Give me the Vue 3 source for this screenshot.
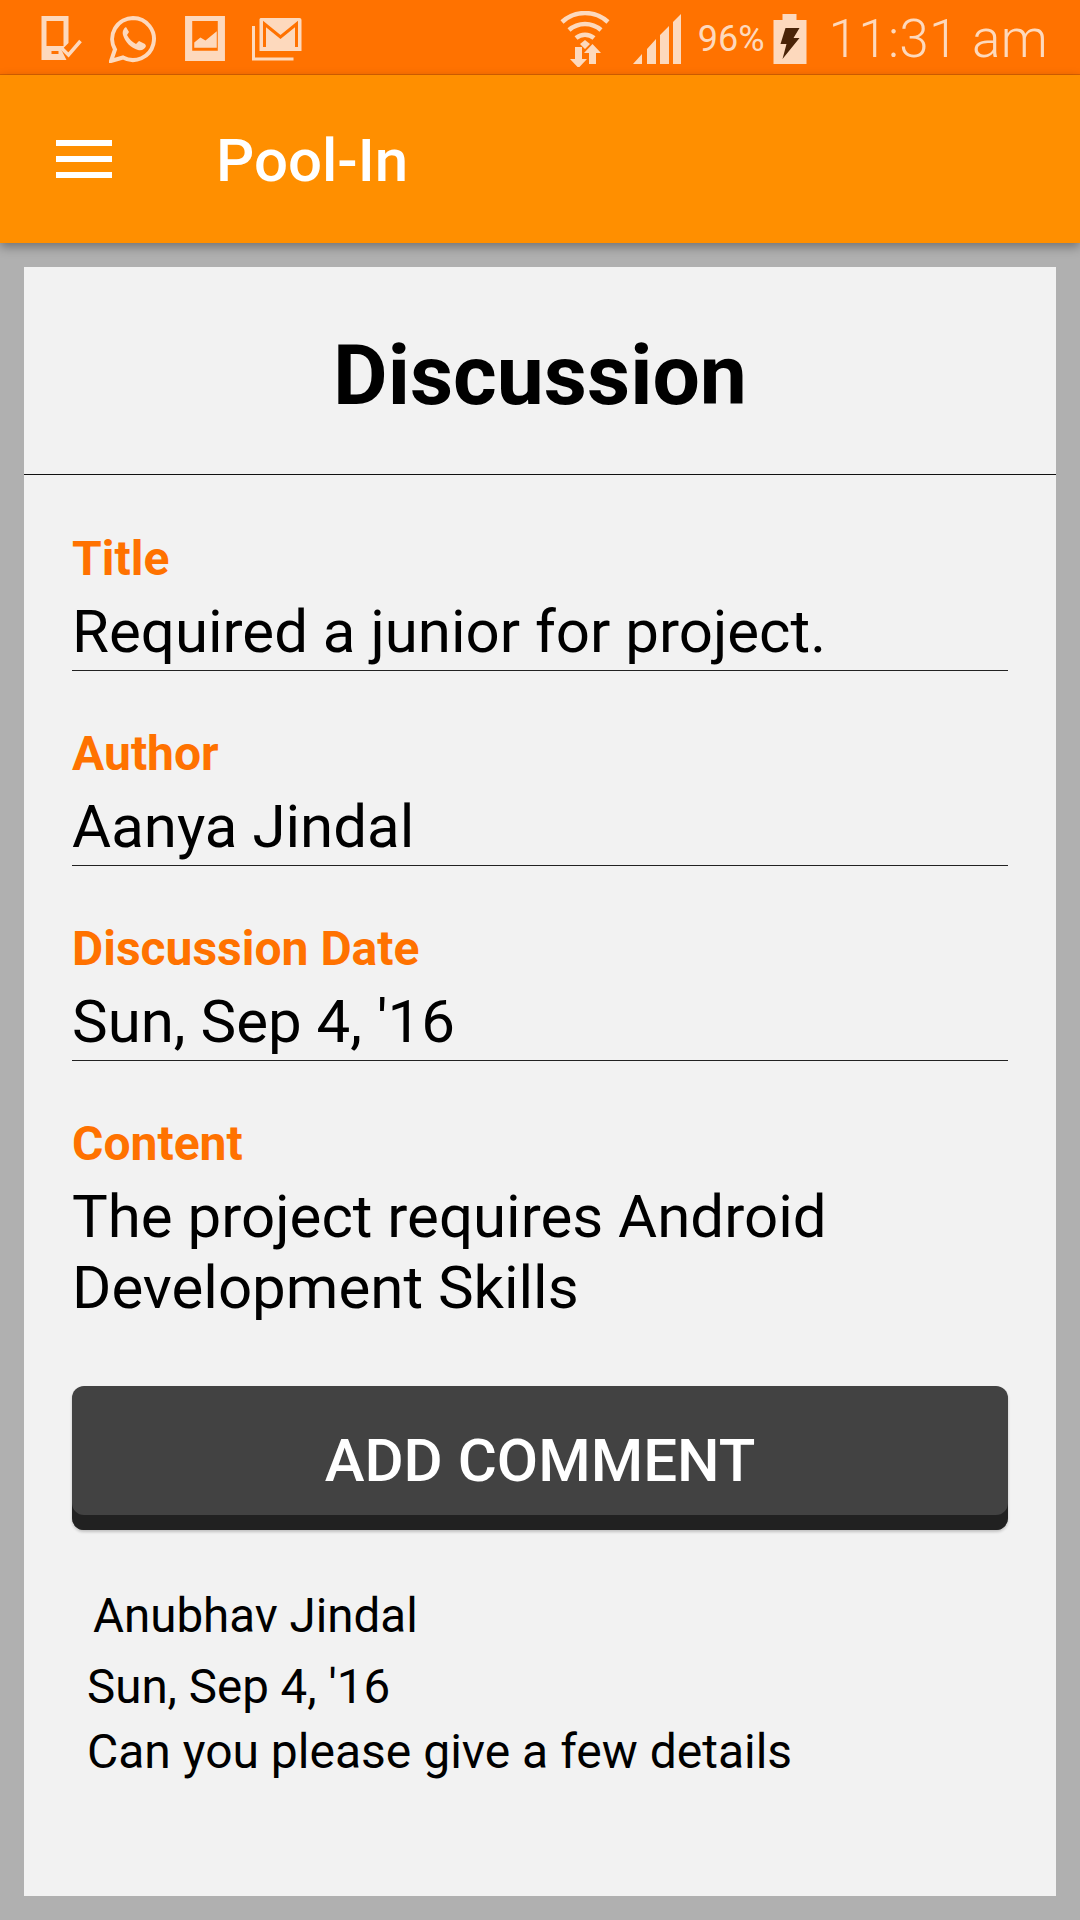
<template>
  <div class="screen">
    <div class="status-bar">
      <div class="status-left">
        <svg class="ic" width="41" height="46" viewBox="0 0 40 46">
          <path d="M0 0h27v27l-7 7 5 10H0z M5 5v25h17V5z" fill-rule="evenodd" fill="#fdd9bd" />
          <rect x="10" y="35" width="7" height="3" fill="#ff7200" />
          <path d="M20 32l7 7 12-14" fill="none" stroke="#fdd9bd" stroke-width="3.5" />
        </svg>
        <svg class="ic wa" width="48" height="48" viewBox="0 0 48 48">
          <path d="M24 3a21 21 0 0 0-18 31.500L2 46l12-3.500A21 21 0 1 0 24 3z" fill="none" stroke="#fdd9bd" stroke-width="4" />
          <path d="M17 12c-2 1-4 4-3 8 2 7 8 13 15 15 4 1 7-1 8-4l-1-2-6-3-3 3c-4-2-7-5-9-9l2-3-3-5z" fill="#fdd9bd" />
        </svg>
        <svg class="ic pic" width="40" height="45" viewBox="0 0 39 44">
          <path d="M0 0h39v44H0z M7 5v29h25V5z" fill-rule="evenodd" fill="#fdd9bd" />
          <path d="M9 31v-5l6-5 5 3 11-9v16z" fill="#fdd9bd" />
        </svg>
        <svg class="ic mail" width="51" height="44" viewBox="0 0 50 44">
          <path d="M2 9v33h40" fill="none" stroke="#fdd9bd" stroke-width="3" />
          <path d="M9 1h39a2 2 0 0 1 2 2v31H8V2z" fill="#fdd9bd" />
          <path d="M13 30V7l16 13L45 7v23" fill="none" stroke="#ff7200" stroke-width="3" />
        </svg>
      </div>
      <div class="status-right">
        <svg class="ic wifi" width="50" height="56" viewBox="0 0 50 56">
          <path d="M2 11a34 34 0 0 1 46 0M9 19a24 24 0 0 1 32 0M16 27a14 14 0 0 1 18 0" fill="none" stroke="#fdd9bd" stroke-width="4.500" />
          <path d="M20 33l5-4 5 4-5 5z M15 36h7v12h5l-8.500 9L10 48h5z M29 53V42h-5l8.500-9L41 42h-5v11z" fill="#fdd9bd" />
        </svg>
        <svg class="ic signal" width="48" height="50" viewBox="0 0 48 50">
          <path d="M0 50l9-10v10z M14 35l9-10v25h-9z M27 21l9-9v38h-9z M40 8l8-8v50h-8z" fill="#fdd9bd" />
        </svg>
        <span class="pct">96%</span>
        <svg class="ic batt" width="34" height="50" viewBox="0 0 33 50">
          <path d="M9 0h14v6h10v44H0V6h9z" fill="#fdd9bd" />
          <path d="M12 14h14l-6 10h6L9 45l4-15H7z" fill="#4a2408" />
        </svg>
        <span class="clock">11:31 am</span>
      </div>
    </div>

    <div class="app-bar">
      <div class="menu-btn"><span></span><span></span><span></span></div>
      <div class="app-title">Pool-In</div>
    </div>

    <div class="card">
      <div class="card-head">Discussion</div>
      <div class="card-body">
        <div class="field underlined" v-for="f in fields" :key="f.label">
          <div class="field-label">{{ f.label }}</div>
          <div class="field-value">{{ f.value }}</div>
        </div>
        <div class="field">
          <div class="field-label">Content</div>
          <div class="field-value">The project requires Android<br>Development Skills</div>
        </div>
        <button class="add-btn">ADD COMMENT</button>
        <div class="comment">
          <div class="c-author">Anubhav Jindal</div>
          <div class="c-date">Sun, Sep 4, '16</div>
          <div class="c-text">Can you please give a few details</div>
        </div>
      </div>
    </div>
  </div>
</template>

<script setup>
const fields = [
  { label: 'Title', value: 'Required a junior for project.' },
  { label: 'Author', value: 'Aanya Jindal' },
  { label: 'Discussion Date', value: "Sun, Sep 4, '16" },
]
</script>

<style>
html, body {
  margin: 0;
  background: #b0b0b0;
}
</style>

<style scoped>
.screen {
  width: 1080px;
  height: 1920px;
  overflow: hidden;
  background: #b0b0b0;
  font-family: Roboto, sans-serif;
  display: flex;
  flex-direction: column;
}
.status-bar {
  height: 75px;
  box-sizing: border-box;
  background: #ff7200;
  border-bottom: 1px solid #d96100;
  display: flex;
  justify-content: space-between;
  align-items: center;
  padding: 3px 32px 0 41px;
}
.status-left, .status-right {
  display: flex;
  align-items: center;
}
.ic { display: block; }
.wa { margin-left: 27px; }
.pic { margin-left: 28px; }
.mail { margin-left: 26px; }
.wifi { margin-right: 23px; }
.signal { margin-right: 17px; }
.pct {
  font-size: 36px;
  color: #fdd9bd;
  margin-right: 8px;
}
.clock {
  font-size: 53px;
  font-weight: 300;
  letter-spacing: 0.300px;
  color: #fdd9bd;
  margin-left: 22px;
}
.app-bar {
  height: 168px;
  flex: none;
  background: #ff8f00;
  display: flex;
  align-items: center;
  box-shadow: 0 4px 10px rgba(0, 0, 0, 0.35);
  position: relative;
}
.menu-btn {
  width: 56px;
  margin-left: 56px;
  display: flex;
  flex-direction: column;
  gap: 10px;
}
.menu-btn span {
  height: 6px;
  background: #fff;
}
.app-title {
  margin-left: 104px;
  margin-top: 2px;
  font-size: 60px;
  font-weight: 500;
  color: #fff;
}
.card {
  margin: 24px 24px 0;
  height: 1629px;
  background: #f2f2f2;
}
.card-head {
  height: 207px;
  border-bottom: 1px solid #111;
  font-size: 84px;
  font-weight: 700;
  text-align: center;
  line-height: 217px;
  color: #000;
}
.card-body {
  padding: 59px 48px 0;
}
.field { margin-bottom: 63px; }
.underlined {
  border-bottom: 1px solid #222;
  height: 136px;
  margin-bottom: 58px;
}
.field-label {
  font-size: 48px;
  font-weight: 700;
  line-height: 50px;
  color: #ff7200;
}
.field-value {
  font-size: 60px;
  line-height: 71px;
  margin-top: 12px;
  color: #000;
}
.add-btn {
  display: block;
  width: 100%;
  height: 144px;
  padding: 5px 0 0;
  border: 0;
  border-radius: 12px;
  background: #424242;
  box-shadow: inset 0 -15px 0 #212121, 0 2px 3px rgba(0, 0, 0, 0.2);
  color: #fff;
  font-family: inherit;
  font-size: 60px;
  font-weight: 500;
}
.comment {
  margin-top: 56px;
  padding-left: 15px;
  color: #000;
  font-size: 48px;
}
.c-author {
  padding-left: 6px;
  font-size: 47.500px;
  line-height: 60px;
}
.c-date {
  font-size: 47.500px;
  line-height: 60px;
  margin-top: 11px;
}
.c-text {
  line-height: 60px;
  margin-top: 5px;
}
</style>
